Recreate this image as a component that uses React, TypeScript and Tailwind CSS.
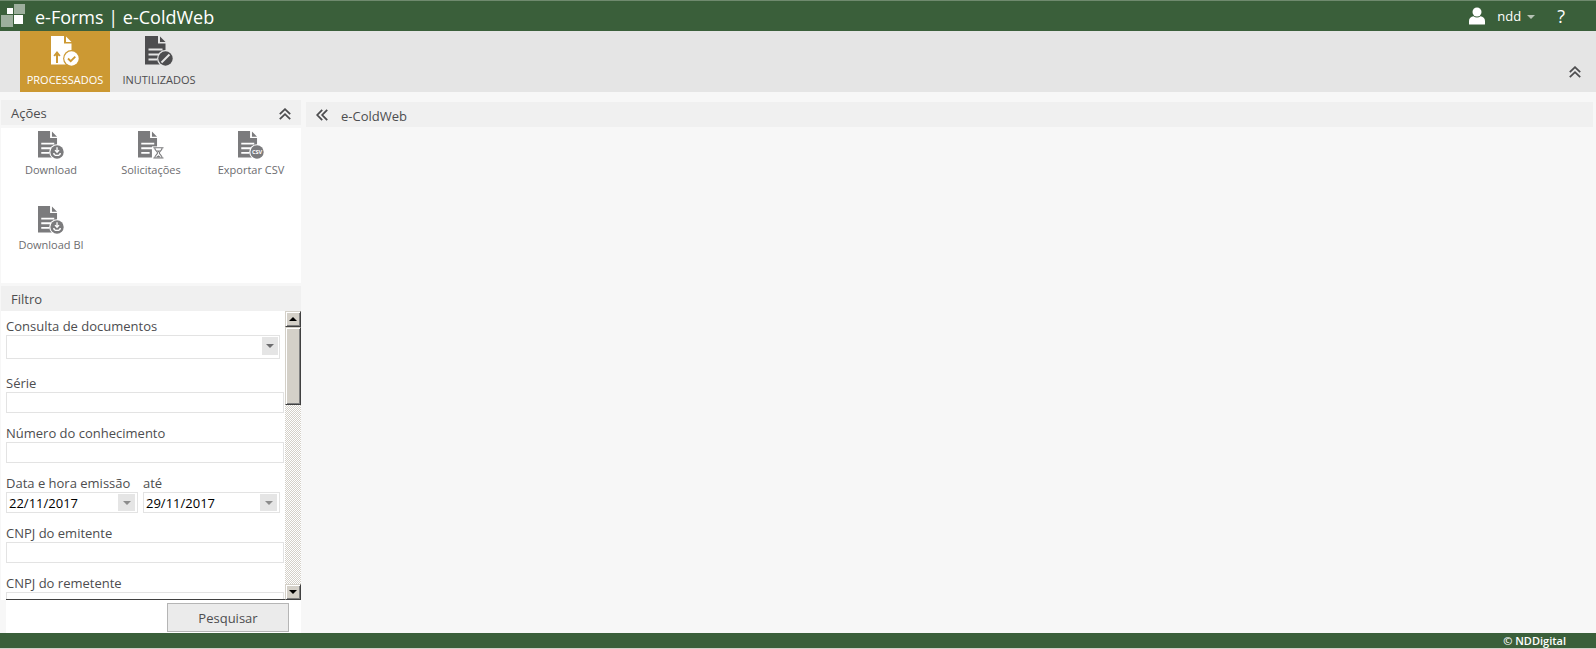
import { ReactNode, useState } from "react";

type Badge = "check" | "slash" | "download" | "hourglass" | "csv";

const actions: { label: string; badge: Badge }[] = [
  { label: "Download", badge: "download" },
  { label: "Solicitações", badge: "hourglass" },
  { label: "Exportar CSV", badge: "csv" },
  { label: "Download BI", badge: "download" },
];

function DocIcon({ badge, cut, className }: { badge: Badge; cut: string; className?: string }) {
  return (
    <svg viewBox="0 0 28 30" width="28" height="30" fill="currentColor" className={className} aria-hidden="true">
      <path d="M0 0h13v7.500h7.500V28.500H0z" />
      <path d="M15 0.500L20.500 6H15z" />
      {badge === "check" ? (
        <path d="M6 27V17.500M3.200 20L6 16.500l2.800 3.500" fill="none" stroke={cut} strokeWidth="2" />
      ) : (
        <path d="M3.500 13.500h14M3.500 18.500h14M3.500 23.500h9" stroke={cut} strokeWidth="2" />
      )}
      {badge === "hourglass" ? (
        <>
          <path d="M15 16.500h13V30H15z" fill={cut} />
          <path
            d="M16.500 18h11M16.500 29h11M18 18c0 3 3 4 3 5.500s-3 2.500-3 5.500M26 18c0 3-3 4-3 5.500s3 2.500 3 5.500"
            fill="none"
            stroke="currentColor"
            strokeWidth="1.200"
          />
          <path d="M19.500 28.500c0-1.200 2-1.700 2.500-2.500.5.800 2.500 1.300 2.500 2.500zM20 21h4l-2 2z" />
        </>
      ) : (
        <>
          <circle cx="20.500" cy="22.500" r="8.400" fill={cut} />
          <circle cx="20.500" cy="22.500" r="7.200" />
        </>
      )}
      {badge === "check" && <path d="M17 22.500l2.700 2.700 4.600-4.600" fill="none" stroke={cut} strokeWidth="1.800" />}
      {badge === "slash" && <path d="M16.500 26.500l8-8" stroke={cut} strokeWidth="2" />}
      {badge === "download" && (
        <path
          d="M20.500 17.500v5M18.300 20.500l2.200 2.300 2.200-2.300M17 23.500q0 2.700 3.500 2.700t3.500-2.700"
          fill="none"
          stroke={cut}
          strokeWidth="1.400"
        />
      )}
      {badge === "csv" && (
        <text x="20.500" y="25" textAnchor="middle" fontSize="6" fontWeight="bold" fill={cut}>
          CSV
        </text>
      )}
    </svg>
  );
}

function DoubleChevron({ className }: { className?: string }) {
  return (
    <svg viewBox="0 0 12 12" width="12" height="12" fill="none" stroke="currentColor" strokeWidth="1.800" className={className} aria-hidden="true">
      <path d="M0.800 6.200L6 1.200l5.200 5M0.800 11.200L6 6.200l5.200 5" />
    </svg>
  );
}

function Caret({ up = false }: { up?: boolean }) {
  return (
    <svg viewBox="0 0 8 4" width="8" height="4" fill="currentColor" aria-hidden="true">
      <path d={up ? "M0 4h8L4 0z" : "M0 0h8L4 4z"} />
    </svg>
  );
}

function Tab({ label, badge, active, onClick }: { label: string; badge: Badge; active: boolean; onClick: () => void }) {
  return (
    <button
      onClick={onClick}
      className={`flex w-[90px] flex-col items-center pt-[5px] text-[11px] leading-4 ${
        active ? "bg-[#cc9933] text-white" : "text-[#4d4d4f]"
      }`}
    >
      <DocIcon badge={badge} cut={active ? "#cc9933" : "#e5e5e5"} />
      <span className="mt-1.5">{label}</span>
    </button>
  );
}

function Field({ id, label }: { id: string; label: string }) {
  return (
    <div className="mb-2">
      <label htmlFor={id} className="block h-[21px] leading-6">
        {label}
      </label>
      <input id={id} className="block h-[21px] w-full border border-[#e3e3e3] bg-white px-1 outline-none" />
    </div>
  );
}

function DateField({ id, label, value, className }: { id: string; label: string; value: string; className?: string }) {
  return (
    <div className={className}>
      <label htmlFor={id} className="block h-[21px] leading-6 whitespace-nowrap">
        {label}
      </label>
      <div className="flex h-[21px] items-center border border-[#e3e3e3] bg-white pr-0.5">
        <input id={id} defaultValue={value} className="min-w-0 flex-1 pt-0.5 pl-0.5 text-black outline-none" />
        <button aria-label={label} className="flex h-[17px] w-[17px] items-center justify-center bg-[#e5e5e5] text-[#8c8c8c]">
          <Caret />
        </button>
      </div>
    </div>
  );
}

function ScrollButton({ label, children }: { label: string; children: ReactNode }) {
  return (
    <button
      aria-label={label}
      className="flex h-4 w-4 shrink-0 items-center justify-center border border-t-[#d4d0c8] border-r-[#404040] border-b-[#404040] border-l-[#d4d0c8] bg-[#d4d0c8] text-black shadow-[inset_1px_1px_#fff,inset_-1px_-1px_#808080]"
    >
      {children}
    </button>
  );
}

export default function App() {
  const [tab, setTab] = useState("PROCESSADOS");

  return (
    <div className="flex h-screen flex-col overflow-hidden bg-[#f7f7f7] font-['Open_Sans','Noto_Sans',sans-serif] text-[13px] text-[#4d4d4f]">
      {/* Top bar */}
      <header className="flex h-[31px] shrink-0 items-center border-t border-[#6f8a6e] bg-[#3a5f3a] text-white">
        <svg viewBox="0 0 26 26" width="26" height="26" fill="#fff" aria-hidden="true">
          <path d="M14 1h11v10H14zM1 12h12v12H1z" opacity=".5" />
          <path d="M7 5h6v6H7zM14 12h9v9h-9z" />
        </svg>
        <h1 className="ml-[9px] flex-1 pt-0.5 text-lg leading-6">e-Forms | e-ColdWeb</h1>
        <svg viewBox="0 0 16 18" width="16" height="18" fill="currentColor" aria-hidden="true">
          <circle cx="8" cy="5" r="4.500" />
          <path d="M0 17v-3c0-3 2-4.500 4.500-4.800 2 1.600 5 1.600 7 0C14 9.500 16 11 16 14v3q0 .5-.5.5H.5Q0 17.500 0 17z" />
        </svg>
        <button className="ml-3 flex items-center gap-1.5 pt-0.5">
          ndd
          <span className="text-[#b5c2b4]">
            <Caret />
          </span>
        </button>
        <button aria-label="Ajuda" className="mr-[31px] ml-[22px] text-lg leading-6">
          ?
        </button>
      </header>

      {/* Ribbon */}
      <nav className="flex h-[61px] shrink-0 bg-[#e5e5e5] pr-[15px] pl-5">
        <Tab label="PROCESSADOS" badge="check" active={tab === "PROCESSADOS"} onClick={() => setTab("PROCESSADOS")} />
        <div className="ml-1 flex flex-1">
          <Tab label="INUTILIZADOS" badge="slash" active={tab === "INUTILIZADOS"} onClick={() => setTab("INUTILIZADOS")} />
        </div>
        <button aria-label="Recolher menu" className="mb-3.5 self-end">
          <DoubleChevron />
        </button>
      </nav>

      <div className="flex min-h-0 flex-1">
        <aside className="flex w-[301px] shrink-0 flex-col pt-2 pl-px">
          <div className="flex h-[25px] shrink-0 items-center justify-between bg-[#f0f0f0] px-2.5 pt-0.5">
            <h2>Ações</h2>
            <button aria-label="Recolher ações">
              <DoubleChevron />
            </button>
          </div>
          <div className="mt-[3px] grid h-[155px] shrink-0 auto-rows-[75px] grid-cols-3 bg-white">
            {actions.map(({ label, badge }) => (
              <button key={label} className="flex flex-col items-center pt-[3px] text-[11px] leading-4 text-[#6d6d6f]">
                <DocIcon badge={badge} cut="#fff" className="h-7 w-[26px] text-[#7b7b7d]" />
                <span className="mt-[3px]">{label}</span>
              </button>
            ))}
          </div>

          <div className="mt-[3px] flex h-[25px] shrink-0 items-center bg-[#f0f0f0] pt-[3px] pl-2.5">
            <h2>Filtro</h2>
          </div>
          <div className="flex min-h-0 flex-1 bg-white">
            <div className="ml-[5px] min-w-0 flex-1 overflow-hidden border-b border-[#404040] pt-[3px] pr-px">
              <div className="mb-3 pr-1">
                <label htmlFor="consulta" className="block h-[21px] leading-6">
                  Consulta de documentos
                </label>
                <div className="relative">
                  <select id="consulta" className="block h-6 w-full appearance-none border border-[#e3e3e3] bg-white px-1 outline-none">
                    <option></option>
                  </select>
                  <span className="pointer-events-none absolute top-0.5 right-0.5 flex h-[18px] w-4 items-center justify-center bg-[#e5e5e5] text-[#6d6d6f]">
                    <Caret />
                  </span>
                </div>
              </div>
              <Field id="serie" label="Série" />
              <Field id="numero" label="Número do conhecimento" />
              <div className="mb-2 flex gap-[5px] pr-1">
                <DateField id="inicio" label="Data e hora emissão" value="22/11/2017" className="w-[132px]" />
                <DateField id="fim" label="até" value="29/11/2017" className="min-w-0 flex-1" />
              </div>
              <Field id="emitente" label="CNPJ do emitente" />
              <Field id="remetente" label="CNPJ do remetente" />
            </div>
            <div className="flex w-4 shrink-0 flex-col bg-[repeating-conic-gradient(#d4d0c8_0_25%,#fff_0_50%)] bg-[length:2px_2px]">
              <ScrollButton label="Rolar para cima">
                <Caret up />
              </ScrollButton>
              <div className="h-[78px] border border-t-[#d4d0c8] border-r-[#404040] border-b-[#404040] border-l-[#d4d0c8] bg-[#d4d0c8] shadow-[inset_1px_1px_#fff,inset_-1px_-1px_#808080]" />
              <div className="flex-1" />
              <ScrollButton label="Rolar para baixo">
                <Caret />
              </ScrollButton>
            </div>
          </div>
          <div className="ml-[5px] flex h-[33px] shrink-0 justify-end bg-white pt-[3px] pr-3">
            <button className="h-[29px] w-[122px] border border-[#b5b5b5] bg-[#ebebeb] pt-0.5">Pesquisar</button>
          </div>
        </aside>

        <main className="min-w-0 flex-1 pt-2.5 pr-[3px] pl-[5px]">
          <div className="flex h-[25px] items-center bg-[#f0f0f0] pl-2.5">
            <button aria-label="Recolher painel">
              <DoubleChevron className="-rotate-90" />
            </button>
            <h2 className="ml-[13px] pt-1">e-ColdWeb</h2>
          </div>
        </main>
      </div>

      <footer className="flex h-4 shrink-0 items-center justify-end border-b border-[#d4d0c8] bg-[#3a5f3a] pr-[30px] text-[11px] leading-4 font-semibold text-white">
        © NDDigital
      </footer>
    </div>
  );
}
